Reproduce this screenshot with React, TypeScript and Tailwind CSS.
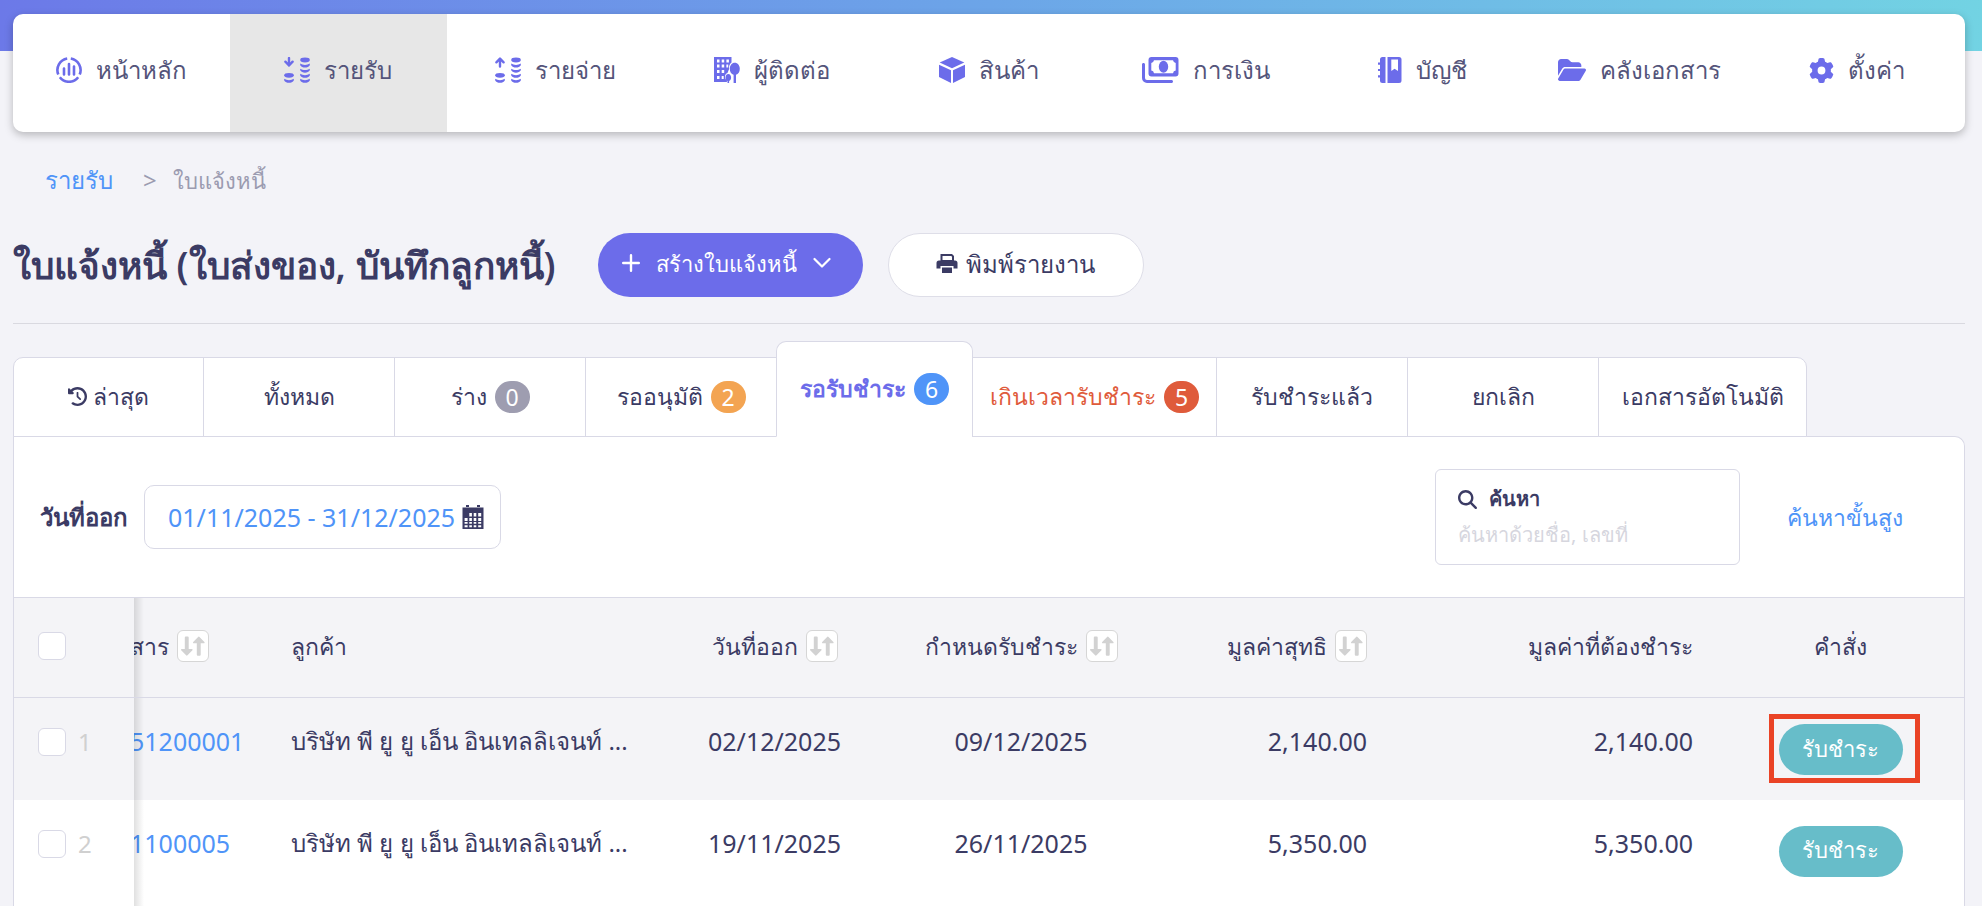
import { ReactNode } from "react";
import { clsx } from "clsx";
import {
  FaClockRotateLeft,
  FaFolderOpen,
  FaGear,
  FaMagnifyingGlass,
} from "react-icons/fa6";

/* ---------- icons ---------- */

function DashboardIcon() {
  return (
    <svg width="26" height="26" viewBox="0 0 26 26" fill="none" stroke="currentColor">
      <path
        d="M11.200 1.500A11.700 11.700 0 0 0 2.300 17.500M14.800 1.500A11.700 11.700 0 0 1 23.700 17.500M3.800 20.300A11.700 11.700 0 0 0 22.200 20.300"
        strokeWidth="2.600"
      />
      <path d="M8 11.500v6M13 7v10.500M18 9.500v8" strokeWidth="2.600" strokeLinecap="round" />
    </svg>
  );
}

function Coins({ up }: { up?: boolean }) {
  return (
    <svg width="26" height="26" viewBox="0 0 26 26" fill="currentColor">
      <g fill="none" stroke="currentColor" strokeWidth="2.400" strokeLinecap="round" strokeLinejoin="round">
        {up ? (
          <path d="M5 9.500V2M1.400 5.300 5 1.500l3.600 3.800" />
        ) : (
          <path d="M5 1v7.500M1.400 4.700 5 8.500l3.600-3.800" />
        )}
      </g>
      <ellipse cx="5" cy="18.300" rx="4.800" ry="2.400" />
      <path d="M.2 21.800c2.600 1.800 7 1.800 9.600 0v1.600c-1.600 3.100-8 3.100-9.600 0z" />
      <ellipse cx="21" cy="3" rx="4.800" ry="2.400" />
      <path d="M16.200 6.600c2.600 1.800 7 1.800 9.600 0v1.600c-1.600 3.100-8 3.100-9.600 0z" />
      <path d="M16.200 11.700c2.600 1.800 7 1.800 9.600 0v1.600c-1.600 3.100-8 3.100-9.600 0z" />
      <path d="M16.200 16.800c2.600 1.800 7 1.800 9.600 0v1.600c-1.600 3.100-8 3.100-9.600 0z" />
      <path d="M16.200 21.800c2.600 1.800 7 1.800 9.600 0v1.600c-1.600 3.100-8 3.100-9.600 0z" />
    </svg>
  );
}

function ContactIcon() {
  return (
    <svg width="26" height="26" viewBox="0 0 26 26" fill="currentColor">
      <path
        fillRule="evenodd"
        d="M0 0h17.500v5.500c-2 1.500-2.800 3.800-2.400 6.500l-1.600 4c-1.700.4-2.700 2-2.500 4.200.1 1.400.8 2.400 1.900 2.900V25H0zM3 2.500v3h2.500v-3zM7.700 2.500v3h2.500v-3zM12.400 2.500v3h2.500v-3zM3 7.500v3h2.500v-3zM7.700 7.500v3h2.500v-3zM12.400 7.500v3h1.800v-3zM3 13v3h2.500v-3zM7.700 13v3h2.500v-3zM3 19v3h2.500v-3zM7.700 19v3h2v-3z"
      />
      <path d="M20.800 5.800c2.900 0 5 2.700 5 6 0 3.100-1.500 5.400-3.800 6V26h-2.400v-8.200c-2.300-.6-3.800-2.900-3.800-6 0-3.300 2.100-6 5-6z" />
      <path d="M14.300 17c1.700 0 2.800 1.600 2.800 3.500 0 1.700-.8 3-2 3.400V26h-1.600v-2.100c-1.200-.4-2-1.700-2-3.400 0-1.900 1.100-3.500 2.800-3.500z" />
    </svg>
  );
}

function MoneyIcon() {
  return (
    <svg width="37" height="26" viewBox="0 0 37 26" fill="currentColor">
      <path
        fillRule="evenodd"
        d="M9.500 0h24A3 3 0 0 1 36.500 3v13.500a3 3 0 0 1-3 3h-24a3 3 0 0 1-3-3V3a3 3 0 0 1 3-3zM12 3.300A3.200 3.200 0 0 1 9.300 6v7.500a3.200 3.200 0 0 1 2.700 2.700h19a3.200 3.200 0 0 1 2.700-2.700V6A3.200 3.200 0 0 1 31 3.300z"
      />
      <ellipse cx="21.500" cy="9.800" rx="4.700" ry="6" />
      <path d="M1.500 6C.6 6 0 6.700 0 7.600V21a5 5 0 0 0 5 5h24.500c.9 0 1.500-.7 1.500-1.500s-.6-1.500-1.500-1.500H5a2 2 0 0 1-2-2V7.600C3 6.700 2.400 6 1.500 6z" />
    </svg>
  );
}

function LedgerIcon() {
  return (
    <svg width="24" height="26" viewBox="0 0 24 26" fill="currentColor">
      <path d="M4.500 0H7.500v26H4.500A2.500 2.500 0 0 1 2 23.500v-3H0v-2.200h2v-4.200H0v-2.200h2V7.700H0V5.500h2v-3A2.500 2.500 0 0 1 4.500 0z" />
      <path fillRule="evenodd" d="M9.500 0H21a2.500 2.500 0 0 1 2.500 2.500v21A2.500 2.500 0 0 1 21 26H9.500zM13.300 2.500V14l3.300-2.300L20 14V2.500z" />
    </svg>
  );
}

function CubeIcon() {
  return (
    <svg width="26" height="26" viewBox="0 0 26 26" fill="currentColor">
      <path d="M13 0 25.300 5.500 13 11.300.7 5.500z" />
      <path d="M0 7.700 12 13.300V26L0 20z" />
      <path d="M26 7.700 14 13.300V26l12-6z" />
    </svg>
  );
}

function PrinterIcon() {
  return (
    <svg width="22" height="20" viewBox="0 0 22 20" fill="currentColor">
      <path fillRule="evenodd" d="M4.500 0H16l2 2v5H4.500zM6.500 2v4H16V2.800L15.200 2z" />
      <path d="M3 6.500h16a2.500 2.500 0 0 1 2.500 2.500v5.500h-4V12h-13v2.500h-4V9A2.500 2.500 0 0 1 3 6.500z" />
      <path d="M6 13.500h10V19H6z" />
    </svg>
  );
}

function CalendarIcon() {
  return (
    <svg width="22" height="24" viewBox="0 0 22 24" fill="currentColor">
      <path d="M4 0h3v2H4zM15 0h3v2h-3z" />
      <path
        fillRule="evenodd"
        d="M.5 2.500h21V24H.5zM7.300 8v3.500h2.600V8zM11.700 8v3.500h2.600V8zM16.200 8v3.500h3V8zM2.600 13v3h3v-3zM7.300 13v3h2.600v-3zM11.700 13v3h2.600v-3zM16.200 13v3h3v-3zM2.600 17v1.800h3V17zM7.300 17v1.800h2.600V17zM11.700 17v1.800h2.600V17zM16.200 17v1.800h3V17zM2.600 20.200v2h3v-2zM7.300 20.200v2h2.600v-2zM11.700 20.200v2h2.600v-2zM16.200 20.200v2h3v-2z"
      />
    </svg>
  );
}

function SortButton({ label }: { label: string }) {
  return (
    <button
      aria-label={label}
      className="flex h-8 w-8 shrink-0 items-center justify-center rounded-md border border-[#d6d6d6] bg-white text-[#d2d2d2]"
    >
      <svg width="24" height="20" viewBox="0 0 24 20" fill="currentColor">
        <path d="M3.800 1.500a1 1 0 0 1 1-1h1.900a1 1 0 0 1 1 1V13h3.200c.7 0 1 .8.5 1.300l-4.900 5a1 1 0 0 1-1.400 0l-4.900-5c-.5-.5-.1-1.300.5-1.300h3.100z" />
        <path d="M15.800 18.700a1 1 0 0 0 1 1h1.900a1 1 0 0 0 1-1V7.200h3.200c.7 0 1-.8.5-1.300l-4.900-5a1 1 0 0 0-1.400 0l-4.900 5c-.5.5-.1 1.300.5 1.300h3.100z" />
      </svg>
    </button>
  );
}

/* ---------- data ---------- */

const menu: { label: string; icon: ReactNode; active?: boolean }[] = [
  { label: "หน้าหลัก", icon: <DashboardIcon /> },
  { label: "รายรับ", icon: <Coins />, active: true },
  { label: "รายจ่าย", icon: <Coins up /> },
  { label: "ผู้ติดต่อ", icon: <ContactIcon /> },
  { label: "สินค้า", icon: <CubeIcon /> },
  { label: "การเงิน", icon: <MoneyIcon /> },
  { label: "บัญชี", icon: <LedgerIcon /> },
  { label: "คลังเอกสาร", icon: <FaFolderOpen size={28} /> },
  { label: "ตั้งค่า", icon: <FaGear size={25} /> },
];

const tabs = [
  { label: "ล่าสุด", width: "w-[191px]", history: true },
  { label: "ทั้งหมด", width: "w-48" },
  { label: "ร่าง", width: "w-48", count: 0, badge: "bg-[#9e9db0]" },
  { label: "รออนุมัติ", width: "w-48", count: 2, badge: "bg-[#f3a452]" },
  { label: "รอรับชำระ", width: "w-[197px]", count: 6, badge: "bg-[#4f94f8]", active: true },
  { label: "เกินเวลารับชำระ", width: "w-[245px]", count: 5, badge: "bg-[#df5b3b]", overdue: true },
  { label: "รับชำระแล้ว", width: "w-48" },
  { label: "ยกเลิก", width: "w-48" },
  { label: "เอกสารอัตโนมัติ", width: "w-[209px]" },
];

const invoices = [
  { no: "51200001", customer: "บริษัท พี ยู ยู เอ็น อินเทลลิเจนท์ ...", issued: "02/12/2025", due: "09/12/2025", total: "2,140.00", remain: "2,140.00", marked: true },
  { no: "1100005", customer: "บริษัท พี ยู ยู เอ็น อินเทลลิเจนท์ ...", issued: "19/11/2025", due: "26/11/2025", total: "5,350.00", remain: "5,350.00" },
];

const checkboxStyle =
  "h-7 w-7 shrink-0 appearance-none rounded-md border border-[#d9d9e6] bg-white checked:bg-[#6c6cea]";

const frozenStyle =
  "relative z-10 pl-6 after:pointer-events-none after:absolute after:inset-y-0 after:left-full after:w-2.5 after:bg-linear-to-r after:from-black/12 after:to-transparent";

function TopMenu() {
  return (
    <nav className="-mt-[37px] grid h-[118px] grid-cols-9 overflow-hidden rounded-[10px] bg-white shadow-[0_3px_8px_rgba(0,0,0,0.25)]">
      {menu.map((item) => (
        <a
          key={item.label}
          href="#"
          className={clsx(
            "flex items-center justify-center gap-3.5 pb-1.5 whitespace-nowrap text-[#54547a]",
            item.active && "bg-[#e7e7e7]"
          )}
        >
          <span className="text-[#6c6cea]">{item.icon}</span>
          <span>{item.label}</span>
        </a>
      ))}
    </nav>
  );
}

function Tabs() {
  return (
    <div className="relative z-10 mt-[17px] flex items-end text-[23px]">
      {tabs.map((tab, i) => (
        <button
          key={tab.label}
          className={clsx(
            "flex shrink-0 items-center justify-center gap-2 border border-[#d9d9e6] bg-white whitespace-nowrap",
            tab.width,
            tab.active
              ? "h-24 rounded-t-[10px] border-b-white font-semibold text-[#6c6cea]"
              : "h-20",
            i > 0 && "-ml-px",
            i === 0 && "rounded-tl-[10px]",
            i === tabs.length - 1 && "rounded-tr-[10px]",
            tab.overdue && "text-[#df5b3b]"
          )}
        >
          <span className="flex items-center gap-1.5 pb-0.5">
            {tab.history && <FaClockRotateLeft size={19} />}
            {tab.label}
          </span>
          {tab.count !== undefined && (
            <span className={clsx("w-[35px] rounded-full leading-8 font-normal text-white", tab.badge)}>
              {tab.count}
            </span>
          )}
        </button>
      ))}
    </div>
  );
}

function Filters() {
  return (
    <div className="flex h-40 items-center pr-[61px] pl-[26px]">
      <label htmlFor="issued" className="w-[104px] font-semibold">
        วันที่ออก
      </label>
      <div className="flex h-16 w-[357px] items-center rounded-[10px] border border-[#d9d9e6] px-4">
        <input
          id="issued"
          defaultValue="01/11/2025 - 31/12/2025"
          className="min-w-0 flex-1 pl-[7px] text-[25px] text-[#4f94f8] outline-none"
        />
        <CalendarIcon />
      </div>
      <div className="mr-[47px] ml-auto flex h-24 w-[305px] flex-col justify-center gap-1 rounded-md border border-[#d9d9e6] px-[22px] text-[20px]">
        <label htmlFor="search" className="flex items-center gap-3 font-semibold">
          <FaMagnifyingGlass size={19} />
          ค้นหา
        </label>
        <input
          id="search"
          placeholder="ค้นหาด้วยชื่อ, เลขที่"
          className="w-full outline-none placeholder:text-[#d6d6de]"
        />
      </div>
      <a href="#" className="text-[23px] text-[#4f94f8]">
        ค้นหาขั้นสูง
      </a>
    </div>
  );
}

function InvoiceTable() {
  return (
    <table className="w-full table-fixed whitespace-nowrap">
      <colgroup>
        <col className="w-[120px]" />
        <col className="w-[141px]" />
        <col />
        <col className="w-[189px]" />
        <col className="w-[304px]" />
        <col className="w-[218px]" />
        <col className="w-[326px]" />
        <col className="w-[247px]" />
      </colgroup>
      <thead>
        <tr className="h-[100px] border-y border-[#d9d9e6] bg-[#f4f4f7] text-left text-[23px]">
          <th className={clsx(frozenStyle, "bg-[#f4f4f7] pb-1")}>
            <input type="checkbox" aria-label="เลือกทั้งหมด" className={clsx(checkboxStyle, "block")} />
          </th>
          <th className="pb-1 font-normal">
            <div className="-ml-1 flex items-center gap-2">
              สาร <SortButton label="เรียงตามเลขที่เอกสาร" />
            </div>
          </th>
          <th className="pb-1 pl-4 font-normal">ลูกค้า</th>
          <th className="pb-1 font-normal">
            <div className="flex items-center justify-center gap-2">
              วันที่ออก <SortButton label="เรียงตามวันที่ออก" />
            </div>
          </th>
          <th className="pb-1 font-normal">
            <div className="flex items-center justify-center gap-2">
              กำหนดรับชำระ <SortButton label="เรียงตามกำหนดรับชำระ" />
            </div>
          </th>
          <th className="pr-6 pb-1 font-normal">
            <div className="flex items-center justify-end gap-2">
              มูลค่าสุทธิ <SortButton label="เรียงตามมูลค่าสุทธิ" />
            </div>
          </th>
          <th className="pr-6 pb-1 text-right font-normal">มูลค่าที่ต้องชำระ</th>
          <th className="pb-1 text-center font-normal">คำสั่ง</th>
        </tr>
      </thead>
      <tbody>
        {invoices.map((row, i) => (
          <tr
            key={row.no}
            className={clsx("h-[102px] align-top last:h-[106px]", i === 0 ? "bg-[#f4f4f7]" : "bg-white")}
          >
            <td className={clsx(frozenStyle, "pt-7", i === 0 ? "bg-[#f4f4f7]" : "bg-white")}>
              <label className="flex items-center gap-3 text-[#d0d0d0]">
                <input type="checkbox" className={checkboxStyle} />
                {i + 1}
              </label>
            </td>
            <td className="pt-[27px] text-[25px]">
              <a href="#" className="-ml-1 text-[#4f94f8]">
                {row.no}
              </a>
            </td>
            <td className="overflow-hidden pt-[27px] pl-4">{row.customer}</td>
            <td className="pt-[27px] text-center text-[25px]">{row.issued}</td>
            <td className="pt-[27px] text-center text-[25px]">{row.due}</td>
            <td className="pt-[27px] pr-6 text-right text-[25px]">{row.total}</td>
            <td className="pt-[27px] pr-6 text-right text-[25px]">{row.remain}</td>
            <td className="pt-[26px] text-center">
              <div className="relative inline-block">
                <button className="h-[51px] w-[124px] rounded-full bg-[#67bdc9] pb-1 text-[22px] text-white">
                  รับชำระ
                </button>
                {row.marked && (
                  <div className="pointer-events-none absolute -top-2.5 -right-[17px] -bottom-2 -left-2.5 border-5 border-[#ea4326]" />
                )}
              </div>
            </td>
          </tr>
        ))}
      </tbody>
    </table>
  );
}

function App() {
  return (
    <div className="flex min-h-screen flex-col bg-[#f3f3f8] font-['Noto_Sans',sans-serif] text-[24px] leading-8 text-[#3b3b64]">
      <div className="h-[51px] bg-linear-to-r from-[#6c79e8] via-[#6ca5e8] to-[#72d3e3]" />
      <div className="flex flex-1 flex-col pr-[17px] pl-[13px]">
        <TopMenu />

        <div className="mt-8 flex pl-8 text-[#9b9bb0]">
          <a href="#" className="text-[#4f94f8]">
            รายรับ
          </a>
          <span className="mr-4 ml-[30px]">&gt;</span>
          <span className="text-[22px]">ใบแจ้งหนี้</span>
        </div>

        <div className="mt-[37px] flex items-center border-b border-[#d9d9e0] pb-[26px]">
          <h1 className="mr-[42px] text-[37px] font-semibold whitespace-nowrap">
            ใบแจ้งหนี้ (ใบส่งของ, บันทึกลูกหนี้)
          </h1>
          <button className="mr-[25px] flex h-16 w-[265px] items-center justify-center gap-4 rounded-full bg-[#6c6cea] pr-2 pb-1 text-[22px] whitespace-nowrap text-white">
            <svg width="18" height="18" viewBox="0 0 18 18" fill="none" stroke="currentColor" strokeWidth="2.400" strokeLinecap="round">
              <path d="M9 1.200v15.600M1.200 9h15.600" />
            </svg>
            สร้างใบแจ้งหนี้
            <svg width="18" height="12" viewBox="0 0 18 12" fill="none" stroke="currentColor" strokeWidth="2.200" strokeLinecap="round" strokeLinejoin="round">
              <path d="M1.500 2 9 9.500 16.500 2" />
            </svg>
          </button>
          <button className="flex h-16 w-64 items-center justify-center gap-2 rounded-full border border-[#dedee8] bg-white pb-0.5 whitespace-nowrap">
            <PrinterIcon />
            พิมพ์รายงาน
          </button>
        </div>

        <Tabs />

        <section className="-mt-px flex-1 rounded-tr-[10px] border border-b-0 border-[#d9d9e6] bg-white">
          <Filters />
          <InvoiceTable />
        </section>
      </div>
    </div>
  );
}

export default App;
